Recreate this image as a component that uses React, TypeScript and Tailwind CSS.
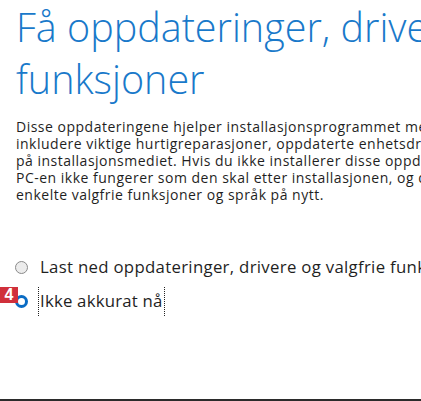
export default function App() {
  const body = [
    "Disse oppdateringene hjelper installasjonsprogrammet med å fungere riktig, og de kan",
    "inkludere viktige hurtigreparasjoner, oppdaterte enhetsdrivere og funksjoner som ikke finnes",
    "på installasjonsmediet. Hvis du ikke installerer disse oppdateringene nå, er det mulig at",
    "PC-en ikke fungerer som den skal etter installasjonen, og du må kanskje installere",
    "enkelte valgfrie funksjoner og språk på nytt.",
  ];

  return (
    <div className="relative w-[421px] h-[401px] overflow-hidden bg-white font-['Open_Sans',sans-serif]">
      <div className="pl-4 pt-[1px]">
        {/* Title */}
        <h1 className="text-[39.5px] font-light leading-[52px] text-[#1979ca] whitespace-nowrap">
          <div>Få oppdateringer, drivere og valgfrie</div>
          <div>funksjoner</div>
        </h1>

        {/* Description */}
        <div className="mt-[13px] text-[14px] tracking-[0.5px] leading-[17px] text-[#1f1f1f] whitespace-nowrap">
          {body.map((line) => (
            <div key={line}>{line}</div>
          ))}
        </div>

        {/* Options */}
        <div className="mt-[53px] flex flex-col gap-[9px] text-[16.8px] text-[#1f1f1f] whitespace-nowrap">
          <div className="flex items-center gap-[12px] h-[22px]">
            <span className="-ml-[1px] w-[13px] h-[13px] rounded-full border border-[#8a8a8a] bg-[#ececec] shrink-0" />
            <span className="tracking-[0.3px]">Last ned oppdateringer, drivere og valgfrie funksjoner (anbefales)</span>
          </div>
          <div className="flex items-center gap-[10px] h-[28px]">
            <span className="-ml-[1px] w-[13px] h-[13px] rounded-full border-[3px] border-[#0a6cc4] bg-white shrink-0" />
            <span className="px-[1px] tracking-[0.2px] h-[29px] flex items-center border-x border-dotted border-[#222]">
              Ikke akkurat nå
            </span>
          </div>
        </div>
      </div>

      {/* Step badge */}
      <div className="absolute left-0 top-[287px] w-[18px] h-[16px] bg-[#d0303b] flex items-center justify-center text-white text-[16px] font-bold leading-none font-['Liberation_Sans',sans-serif]">
        4
      </div>

      <div className="absolute left-0 right-0 bottom-0 h-[2px] bg-[#2b2b2b]" />
    </div>
  );
}
